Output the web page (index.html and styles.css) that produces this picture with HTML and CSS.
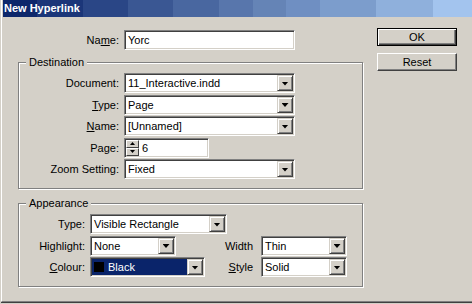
FILE: index.html
```html
<!DOCTYPE html>
<html>
<head>
<meta charset="utf-8">
<title>New Hyperlink</title>
<link rel="stylesheet" href="styles.css">
</head>
<body>
<div class="window">
  <div class="titlebar">New Hyperlink</div>
  <div class="dialog">
    <div class="main">
      <div class="name-row">
        <span class="lbl">Na<u>m</u>e:</span>
        <div class="field"><span class="val">Yorc</span></div>
      </div>

      <fieldset class="group dest">
        <legend>Destination</legend>
        <div class="dest-grid">
          <span class="lbl">Document:</span>
          <div class="field"><span class="val">11_Interactive.indd</span><span class="drop"></span></div>

          <span class="lbl"><u>T</u>ype:</span>
          <div class="field"><span class="val">Page</span><span class="drop"></span></div>

          <span class="lbl"><u>N</u>ame:</span>
          <div class="field"><span class="val">[Unnamed]</span><span class="drop"></span></div>

          <span class="lbl">Page:</span>
          <div class="field page"><span class="spin"><span class="spin-btn up"></span><span class="spin-btn down"></span></span><span class="val">6</span></div>

          <span class="lbl">Zoom Setting:</span>
          <div class="field"><span class="val">Fixed</span><span class="drop"></span></div>
        </div>
      </fieldset>

      <fieldset class="group appear">
        <legend>Appearance</legend>
        <div class="app-grid">
          <span class="lbl">Type:</span>
          <div class="field w-type"><span class="val">Visible Rectangle</span><span class="drop"></span></div>

          <span class="lbl">Highlight:</span>
          <div class="field w-small"><span class="val">None</span><span class="drop"></span></div>
          <span class="lbl lbl2">Width</span>
          <div class="field w-small"><span class="val">Thin</span><span class="drop"></span></div>

          <span class="lbl"><u>C</u>olour:</span>
          <div class="field w-colour"><span class="val selected"><span class="swatch"></span>Black</span><span class="drop"></span></div>
          <span class="lbl lbl2"><u>S</u>tyle</span>
          <div class="field w-small"><span class="val">Solid</span><span class="drop"></span></div>
        </div>
      </fieldset>
    </div>

    <div class="side">
      <button class="btn default">OK</button>
      <button class="btn">Reset</button>
    </div>
  </div>
</div>
</body>
</html>
```

FILE: styles.css
```css
html, body {
  margin: 0;
  padding: 0;
  background: #d4d0c8;
}

body {
  width: 472px;
  height: 304px;
  overflow: hidden;
  font-family: "Liberation Sans", Arial, sans-serif;
  font-size: 11px;
  color: #000;
}

.window {
  box-sizing: border-box;
  margin-left: 1px;
  padding-left: 1px;
  height: 302px;
  border-left: 1px solid #fff;
  border-bottom: 1px solid #808080;
  box-shadow: 0 1px 0 #404040;
}

.titlebar {
  height: 17px;
  line-height: 17px;
  padding-left: 1px;
  color: #fff;
  font-weight: bold;
  white-space: nowrap;
  background: linear-gradient(to right,
    #0d276b 0 34px,
    #1b3679 34px 80px,
    #2a4686 80px 125px,
    #3a5793 125px 170px,
    #4967a0 170px 216px,
    #5876ac 216px 250px,
    #6584b6 250px 283px,
    #6f8fc2 283px 317px,
    #7c9dcc 317px 373px,
    #8fb0dc 373px 430px,
    #a3c4ee 430px 100%);
}

.dialog {
  display: flex;
  align-items: flex-start;
  padding: 11px 0 0 15px;
}

.main {
  width: 345px;
  padding-top: 2px;
}

/* labels */
.lbl {
  text-align: right;
  white-space: nowrap;
  line-height: 20px;
}

.lbl u {
  text-decoration: underline;
  text-underline-offset: 1px;
}

/* sunken fields */
.field {
  box-sizing: border-box;
  height: 20px;
  padding: 1px;
  display: flex;
  align-items: stretch;
  background: #fff;
  border: 1px solid;
  border-color: #808080 #fff #fff #808080;
  box-shadow: inset 1px 1px 0 #404040, inset -1px -1px 0 #d4d0c8;
  overflow: hidden;
}

.val {
  flex: 1;
  min-width: 0;
  padding-left: 2px;
  line-height: 16px;
  white-space: nowrap;
  overflow: hidden;
}

.drop {
  flex: none;
  box-sizing: border-box;
  width: 16px;
  height: 16px;
  background: #d4d0c8;
  border: 1px solid;
  border-color: #d4d0c8 #404040 #404040 #d4d0c8;
  box-shadow: inset 1px 1px 0 #fff, inset -1px -1px 0 #808080;
  display: flex;
  align-items: center;
  justify-content: center;
}

.drop::after {
  content: "";
  width: 7px;
  height: 4px;
  margin-top: 1px;
  background: #000;
  clip-path: polygon(0 0, 100% 0, 50% 100%);
}

/* top name row */
.name-row {
  display: grid;
  grid-template-columns: 101px 171px;
  column-gap: 5px;
  height: 20px;
}

/* groups */
.group {
  margin: 0;
  padding: 0 0 9px 0;
  min-width: 0;
  border: 1px solid #808080;
  box-shadow: inset 1px 1px 0 #fff, 1px 1px 0 #fff;
}

.group legend {
  margin-left: 7px;
  padding: 0 3px;
  line-height: 13px;
  background: #d4d0c8;
}

.dest {
  margin-top: 6px;
}

.appear {
  margin-top: 8px;
}

.dest-grid {
  display: grid;
  grid-template-columns: 100px 171px;
  grid-auto-rows: 20px;
  column-gap: 5px;
  row-gap: 1.5px;
  padding-top: 4px;
}

.page {
  width: 85px;
}

.spin {
  flex: none;
  width: 13px;
  display: flex;
  flex-direction: column;
}

.spin-btn {
  box-sizing: border-box;
  height: 8px;
  background: #d4d0c8;
  border: 1px solid;
  border-color: #fff #404040 #404040 #fff;
  display: flex;
  align-items: center;
  justify-content: center;
}

.spin-btn::after {
  content: "";
  width: 5px;
  height: 3px;
  background: #000;
}

.spin-btn.up::after {
  clip-path: polygon(50% 0, 100% 100%, 0 100%);
}

.spin-btn.down::after {
  clip-path: polygon(0 0, 100% 0, 50% 100%);
}

.page .val {
  padding-left: 3px;
}

.app-grid {
  display: grid;
  grid-template-columns: 66px 115px 46px 86px;
  grid-auto-rows: 20px;
  column-gap: 5px;
  row-gap: 1.5px;
  padding-top: 4px;
}

.app-grid > .field {
  justify-self: start;
}

.lbl2 {
  padding-right: 3px;
}

.w-type {
  grid-column: 2 / 5;
  width: 137px;
}

.w-small {
  width: 86px;
}

.w-colour {
  width: 115px;
}

.selected {
  background: #0a246a;
  color: #fff;
  display: flex;
  align-items: center;
  padding-left: 2px;
}

.swatch {
  width: 10px;
  height: 10px;
  background: #000;
  margin-right: 4px;
}

/* buttons */
.side {
  margin-left: 14px;
  display: flex;
  flex-direction: column;
  gap: 7px;
}

.btn {
  box-sizing: border-box;
  width: 80px;
  height: 18px;
  padding: 0;
  font-family: "Liberation Sans", Arial, sans-serif;
  font-size: 11px;
  color: #000;
  background: #d4d0c8;
  border: 1px solid;
  border-color: #fff #404040 #404040 #fff;
  box-shadow: inset -1px -1px 0 #808080;
}

.btn.default {
  border-color: #000;
  box-shadow: inset 1px 1px 0 #fff, inset -1px -1px 0 #404040, inset -2px -2px 0 #808080;
}
```
